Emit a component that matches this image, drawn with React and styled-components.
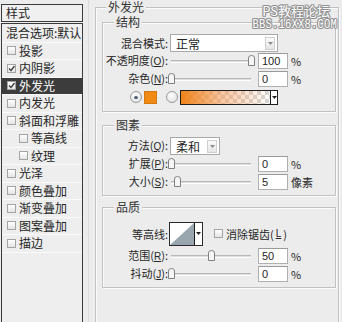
import React from "react";
import styled, { createGlobalStyle } from "styled-components";

const GlobalStyle = createGlobalStyle`
  html, body { margin: 0; padding: 0; background: #ececec; }
  body {
    font-family: "Noto Sans CJK SC", "Liberation Sans", sans-serif;
    font-size: 11px;
    color: #262626;
  }
  * { box-sizing: border-box; }
`;

const Page = styled.div`
  position: relative;
  display: flex;
  width: 342px;
  height: 322px;
  overflow: hidden;
  background: #ececec;
`;

const Sidebar = styled.div`
  display: flex;
  flex-direction: column;
  width: 82px;
  margin-left: 1px;
  padding-top: 4px;
`;

const SideTitle = styled.div`
  height: 18px;
  border: 1px solid #3b3b3b;
  background: #f0f0f0;
  padding-left: 4px;
  font-size: 12px;
  line-height: 16px;
`;

const SideList = styled.div`
  flex: 1;
  margin-top: 1px;
  border: 1px solid #3b3b3b;
  border-bottom: none;
  background: #eeeeee;
`;

const SideItem = styled.div`
  display: flex;
  align-items: center;
  gap: 2px;
  height: ${(p) => (p.$tall ? 18.5 : 17.5)}px;
  padding-left: ${(p) => (p.$indent ? 17 : p.$tall ? 4 : 5)}px;
  border-bottom: 1px solid #fafafa;
  background: ${(p) => (p.$active ? "#3c3c3c" : "transparent")};
  color: ${(p) => (p.$active ? "#ffffff" : "#262626")};
  font-size: 12px;
  line-height: 14px;
  white-space: nowrap;
`;

const CheckBox = styled.span`
  display: inline-flex;
  align-items: center;
  justify-content: center;
  flex: none;
  width: 9px;
  height: 9px;
  margin-right: 1px;
  border: 1px solid #a4a4a4;
  background: linear-gradient(#ffffff, #e4e4e4);
`;

const Gutter = styled.div`
  width: 6px;
  margin-right: 6px;
  border-right: 1px solid #dcdcdc;
`;

const Main = styled.div`
  flex: 1;
  padding: 1px 3px 0 0;
`;

const Group = styled.fieldset`
  margin: ${(p) => p.$top || 0}px 0 0 0;
  padding: 0 ${(p) => (p.$outer ? "2px 0 6px" : `0 ${p.$bottom || 0}px 0`)};
  min-width: 0;
  height: ${(p) => (p.$outer ? "400px" : "auto")};
  border: 1px solid #c2c2c2;
  box-shadow: inset 1px 1px 0 #fbfbfb, 1px 1px 0 #fbfbfb;
`;

const Legend = styled.legend`
  margin-left: ${(p) => (p.$outer ? 4 : 11)}px;
  padding: 0 2px;
  background: #ececec;
  font-size: 12px;
  line-height: 12px;
  color: #333;
`;

const Rows = styled.div`
  display: flex;
  flex-direction: column;
  padding-top: ${(p) => p.$top}px;
`;

const Row = styled.div`
  display: flex;
  align-items: center;
  height: ${(p) => p.$h || 18}px;
`;

const Label = styled.span`
  width: 65px;
  flex: none;
  text-align: right;
  font-size: 11px;
  line-height: 12px;
  white-space: nowrap;
  u { font-family: "Liberation Sans", sans-serif; font-size: 10px; }
`;

const Select = styled.div`
  display: flex;
  align-items: center;
  justify-content: space-between;
  width: ${(p) => p.$w}px;
  height: 18px;
  margin-left: 2px;
  padding: 0 2px 0 5px;
  border: 1px solid #a9a9a9;
  background: #ffffff;
  font-size: 12px;
`;

const SelectArrow = styled.span`
  display: flex;
  align-items: center;
  justify-content: center;
  width: 10px;
  height: 13px;
  border: 1px solid #cfcfcf;
  background: linear-gradient(#fafafa, #e6e6e6);
`;

const Track = styled.div`
  position: relative;
  width: 80px;
  height: 3px;
  margin-left: 3px;
  border-top: 1px solid #b8b8b8;
  border-bottom: 1px solid #ffffff;
  background: #dedede;
`;

const Thumb = styled.svg`
  position: absolute;
  top: -6px;
  display: block;
`;

const NumInput = styled.div`
  width: 30px;
  height: 16px;
  margin-left: 7px;
  padding-left: 3px;
  border: 1px solid #b0b0b0;
  border-top-color: #9a9a9a;
  background: #ffffff;
  font-family: "Liberation Sans", sans-serif;
  font-size: 11px;
  line-height: 14px;
`;

const Unit = styled.span`
  margin-left: 3px;
  font-size: 11px;
`;

const ColorRow = styled(Row)`
  padding-left: 27px;
`;

const Radio = styled.span`
  display: inline-flex;
  align-items: center;
  justify-content: center;
  flex: none;
  width: 12px;
  height: 12px;
  margin-right: ${(p) => p.$gap}px;
  border: 1px solid #9a9a9a;
  border-radius: 50%;
  background: radial-gradient(circle at 40% 35%, #ffffff, #dcdcdc);
  &::after {
    content: "";
    display: ${(p) => (p.$on ? "block" : "none")};
    width: 4px;
    height: 3px;
    border-radius: 50%;
    background: #4a5a6a;
  }
`;

const Swatch = styled.span`
  width: 13px;
  height: 13px;
  margin-right: 9px;
  background: #f08a12;
  border: 1px solid #d07a10;
`;

const GradientBox = styled.div`
  display: flex;
  width: 98px;
  height: 15px;
  border: 1px solid #1e1e1e;
`;

const GradientFill = styled.span`
  flex: 1;
  background: linear-gradient(to right, #f0841a, rgba(244, 150, 80, 0.55) 45%, rgba(255, 255, 255, 0)),
    repeating-conic-gradient(#d6d6d6 0 25%, #ffffff 0 50%) 0 0 / 8px 8px;
`;

const DropArrow = styled.span`
  display: flex;
  align-items: center;
  justify-content: center;
  width: ${(p) => p.$w}px;
  border-left: 1px solid #1e1e1e;
  background: #ffffff;
`;

const ContourBox = styled.div`
  display: flex;
  width: 34px;
  height: 24px;
  margin-left: 1px;
  border: 1px solid #2a2a2a;
`;

const ContourPreview = styled.svg`
  display: block;
  flex: 1;
`;

const AntiAlias = styled.label`
  display: flex;
  align-items: center;
  gap: 2px;
  margin-left: 11px;
  font-size: 11px;
  u { font-family: "Liberation Sans", sans-serif; font-size: 10px; }
`;

const Watermark = styled.div`
  position: absolute;
  top: 4px;
  right: 5px;
  display: flex;
  flex-direction: column;
  align-items: flex-end;
  gap: 1px;
  color: #ffffff;
  text-shadow: 1px 0 0 #909090, -1px 0 0 #909090, 0 1px 0 #909090, 0 -1px 0 #909090,
    1px 1px 0 #a8a8a8, -1px -1px 0 #a8a8a8, 1px -1px 0 #a8a8a8, -1px 1px 0 #a8a8a8;
  pointer-events: none;
`;

const MarkTop = styled.span`
  margin-right: 7px;
  font-size: 13px;
  line-height: 13px;
`;

const MarkBottom = styled.span`
  font-family: "Liberation Mono", monospace;
  font-size: 10.5px;
  line-height: 10px;
  letter-spacing: 0.2px;
  transform: scaleY(1.25);
  transform-origin: top right;
`;

const Check = () => (
  <svg width="7" height="7" viewBox="0 0 7 7">
    <path d="M1 3.5 L3 5.5 L6.5 1" fill="none" stroke="#3c3c3c" strokeWidth="1.3" />
  </svg>
);

const Arrow = ({ color = "#1e1e1e" }) => (
  <svg width="5" height="3" viewBox="0 0 5 3">
    <path d="M0 0 H5 L2.5 3 Z" fill={color} />
  </svg>
);

const Slider = ({ value }) => (
  <Track>
    <Thumb width="7" height="11" viewBox="0 0 7 11" style={{ left: `${value * 80 - 3}px` }}>
      <path d="M0.5 3 Q0.5 0.5 3.5 0.5 Q6.5 0.5 6.5 3 V10.5 H0.5 Z" fill="#f6f6f6" stroke="#808080" />
    </Thumb>
  </Track>
);

const Key = ({ k }) => (
  <>
    (<u>{k}</u>):
  </>
);

const styles = [
  { name: "投影" },
  { name: "内阴影", checked: true },
  { name: "外发光", checked: true, active: true },
  { name: "内发光" },
  { name: "斜面和浮雕" },
  { name: "等高线", indent: true },
  { name: "纹理", indent: true },
  { name: "光泽" },
  { name: "颜色叠加" },
  { name: "渐变叠加" },
  { name: "图案叠加" },
  { name: "描边" },
];

export default function App() {
  return (
    <Page>
      <GlobalStyle />
      <Sidebar>
        <SideTitle>样式</SideTitle>
        <SideList>
          <SideItem $tall>混合选项:默认</SideItem>
          {styles.map((s) => (
            <SideItem key={s.name} $indent={s.indent} $active={s.active}>
              <CheckBox>{s.checked && <Check />}</CheckBox>
              {s.name}
            </SideItem>
          ))}
        </SideList>
      </Sidebar>
      <Gutter />
      <Main>
        <Group $outer>
          <Legend $outer>外发光</Legend>

          <Group $top={3} $bottom={5}>
            <Legend>结构</Legend>
            <Rows $top={6}>
              <Row>
                <Label>混合模式:</Label>
                <Select $w={108}>
                  正常
                  <SelectArrow>
                    <Arrow color="#8a8a8a" />
                  </SelectArrow>
                </Select>
              </Row>
              <Row>
                <Label>
                  不透明度<Key k="O" />
                </Label>
                <Slider value={1} />
                <NumInput>100</NumInput>
                <Unit>%</Unit>
              </Row>
              <Row>
                <Label>
                  杂色<Key k="N" />
                </Label>
                <Slider value={0} />
                <NumInput>0</NumInput>
                <Unit>%</Unit>
              </Row>
              <ColorRow>
                <Radio $on $gap={2} />
                <Swatch />
                <Radio $gap={2} />
                <GradientBox>
                  <GradientFill />
                  <DropArrow $w={7}>
                    <Arrow />
                  </DropArrow>
                </GradientBox>
              </ColorRow>
            </Rows>
          </Group>

          <Group $top={7} $bottom={4}>
            <Legend>图素</Legend>
            <Rows $top={6}>
              <Row>
                <Label>
                  方法<Key k="Q" />
                </Label>
                <Select $w={50}>
                  柔和
                  <SelectArrow>
                    <Arrow color="#8a8a8a" />
                  </SelectArrow>
                </Select>
              </Row>
              <Row>
                <Label>
                  扩展<Key k="P" />
                </Label>
                <Slider value={0} />
                <NumInput>0</NumInput>
                <Unit>%</Unit>
              </Row>
              <Row>
                <Label>
                  大小<Key k="S" />
                </Label>
                <Slider value={0.075} />
                <NumInput>5</NumInput>
                <Unit>像素</Unit>
              </Row>
            </Rows>
          </Group>

          <Group $top={5} $bottom={4}>
            <Legend>品质</Legend>
            <Rows $top={7}>
              <Row $h={27}>
                <Label>等高线:</Label>
                <ContourBox>
                  <ContourPreview viewBox="0 0 25 22" preserveAspectRatio="none">
                    <rect width="25" height="22" fill="#ffffff" />
                    <path d="M0 22 L25 0 V22 Z" fill="#9aa6ae" />
                  </ContourPreview>
                  <DropArrow $w={8}>
                    <Arrow />
                  </DropArrow>
                </ContourBox>
                <AntiAlias>
                  <CheckBox />
                  消除锯齿(<u>L</u>)
                </AntiAlias>
              </Row>
              <Row>
                <Label>
                  范围<Key k="R" />
                </Label>
                <Slider value={0.5} />
                <NumInput>50</NumInput>
                <Unit>%</Unit>
              </Row>
              <Row>
                <Label>
                  抖动<Key k="J" />
                </Label>
                <Slider value={0} />
                <NumInput>0</NumInput>
                <Unit>%</Unit>
              </Row>
            </Rows>
          </Group>
        </Group>
      </Main>
      <Watermark>
        <MarkTop>PS教程论坛</MarkTop>
        <MarkBottom>BBS.16XX8.COM</MarkBottom>
      </Watermark>
    </Page>
  );
}
